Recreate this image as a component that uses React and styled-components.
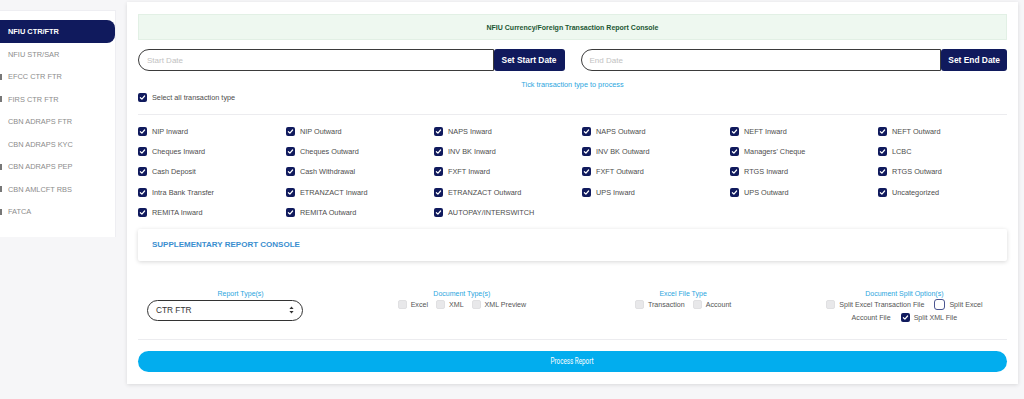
import React from "react";
import styled, { createGlobalStyle } from "styled-components";

const NAVY = "#101a5d";
const BLUE = "#2ba6de";

const GlobalStyle = createGlobalStyle`
  html, body {
    margin: 0;
    padding: 0;
    background: #f6f6f8;
    font-family: "Liberation Sans", Arial, sans-serif;
  }
  * { box-sizing: border-box; }
`;

const Page = styled.div`
  display: flex;
  align-items: flex-start;
  width: 1024px;
  height: 399px;
  overflow: hidden;
`;

const Sidebar = styled.nav`
  width: 116px;
  flex-shrink: 0;
  margin-top: 10px;
  padding: 9px 0 14px;
  background: #fff;
  border-top: 1px solid #eeeef2;
  border-right: 1px solid #eeeef2;
  display: flex;
  flex-direction: column;
`;

const SideItem = styled.div`
  position: relative;
  height: ${(p) => (p.$active ? "23px" : "22.5px")};
  display: flex;
  align-items: center;
  padding-left: 8px;
  font-size: 7.4px;
  color: ${(p) => (p.$active ? "#fff" : "#8c8c8c")};
  font-weight: ${(p) => (p.$active ? 700 : 400)};
  background: ${(p) => (p.$active ? NAVY : "transparent")};
  border-radius: ${(p) => (p.$active ? "0 8px 8px 0" : "0")};

  &::before {
    content: "";
    display: ${(p) => (p.$mark ? "block" : "none")};
    position: absolute;
    left: 0;
    top: 8px;
    width: 2px;
    height: 6px;
    background: #777;
  }
`;

const Main = styled.main`
  padding: 2px 6px 0 11px;
  flex: 1;
  min-width: 0;
`;

const Card = styled.section`
  background: #fff;
  padding: 12px 11px 12px;
  box-shadow: 0 1px 4px rgba(0, 0, 0, 0.12);
  display: flex;
  flex-direction: column;
`;

const Header = styled.div`
  height: 26px;
  display: flex;
  align-items: center;
  justify-content: center;
  background: #eef8f0;
  border: 1px solid #e2f0e5;
  color: #1d5733;
  font-size: 7px;
  font-weight: 700;
`;

const DateRow = styled.div`
  margin-top: 9px;
  display: flex;
  gap: 16px;
`;

const DateGroup = styled.div`
  flex: 1;
  display: flex;
  height: 22px;
`;

const DateInput = styled.div`
  flex: 1;
  border: 1px solid #3b3b3b;
  border-radius: 11px 0 0 11px;
  display: flex;
  align-items: center;
  padding-left: 8px;
  color: #c2c2c2;
  font-size: 8px;
`;

const DateButton = styled.button`
  height: 22px;
  border: none;
  border-radius: 3px;
  background: ${NAVY};
  color: #fff;
  font-family: inherit;
  font-weight: 700;
  font-size: 8.4px;
  padding: 0 ${(p) => p.$pad || "8px"};
`;

const Hint = styled.div`
  margin-top: 9px;
  line-height: 10px;
  text-align: center;
  color: ${BLUE};
  font-size: 7.3px;
`;

const CheckRow = styled.label`
  display: flex;
  align-items: center;
  gap: 5px;
  height: ${(p) => p.$h || "20.4px"};
  margin-top: ${(p) => p.$mt || "0"};
  font-size: 7.3px;
  color: #4d4d4d;
  white-space: nowrap;
`;

const Box = styled.span`
  display: inline-flex;
  align-items: center;
  justify-content: center;
  flex-shrink: 0;
  width: ${(p) => (p.$outline ? "11px" : "9px")};
  height: ${(p) => (p.$outline ? "11px" : "9px")};
  border-radius: ${(p) => (p.$outline ? "3px" : "2px")};
  vertical-align: middle;
  background: ${(p) => (p.$checked ? NAVY : p.$outline ? "#fff" : "#e8e8ea")};
  border: ${(p) =>
    p.$outline ? `1.3px solid #4a5590` : p.$checked ? "none" : "1px solid #e0e0e2"};
`;

const Divider = styled.hr`
  margin: ${(p) => p.$m || "0"};
  border: none;
  border-top: 1px solid #ececef;
  height: 0;
`;

const TypeGrid = styled.div`
  margin-top: 6px;
  display: grid;
  grid-template-columns: repeat(6, 148px);
`;

const SuppCard = styled.div`
  margin-top: 6px;
  height: 32px;
  display: flex;
  align-items: center;
  padding-left: 14px;
  background: #fff;
  box-shadow: 0 1px 4px rgba(0, 0, 0, 0.16);
  border-radius: 2px;
  color: #3a8ecf;
  font-size: 8px;
  font-weight: 700;
`;

const Options = styled.div`
  margin: 28px -8px 0;
  display: grid;
  grid-template-columns: repeat(4, 1fr);
`;

const OptCol = styled.div`
  display: flex;
  flex-direction: column;
  align-items: center;
`;

const OptLabel = styled.div`
  line-height: 10px;
  font-size: 7px;
  color: ${BLUE};
`;

const SelectBox = styled.div`
  align-self: flex-start;
  margin-left: 17px;
  margin-top: 1px;
  width: 156px;
  height: 21px;
  border: 1px solid #333;
  border-radius: 11px;
  display: flex;
  align-items: center;
  justify-content: space-between;
  padding: 0 8px 0 8px;
  font-size: 8.3px;
  color: #333;
`;

const InlineOpts = styled.div`
  width: ${(p) => p.$w || "auto"};
  text-align: center;
  line-height: 13px;
  font-size: 7.1px;
  color: #555;
`;

const Opt = styled.span`
  white-space: nowrap;
  margin-right: ${(p) => p.$mr || "8px"};
`;

const BoxGap = styled.span`
  display: inline-block;
  margin-right: 4px;
  line-height: 0;
  vertical-align: middle;
  position: relative;
  top: -1px;
`;

const ProcessButton = styled.button`
  margin-top: 11px;
  height: 21px;
  border: none;
  border-radius: 11px;
  background: #02adee;
  color: #fff;
  font-family: "Roboto", sans-serif;
  font-size: 8.5px;
  display: flex;
  align-items: center;
  justify-content: center;

  span {
    display: inline-block;
    transform: scaleX(0.74);
  }
`;

const Check = () => (
  <svg width="7" height="7" viewBox="0 0 7 7">
    <path d="M1.4 3.7 L2.9 5.1 L5.6 2" fill="none" stroke="#fff" strokeWidth="1.2" strokeLinecap="round" strokeLinejoin="round" />
  </svg>
);

const CheckBox = ({ checked, outline }) => (
  <Box $checked={checked} $outline={outline}>
    {checked && <Check />}
  </Box>
);

const InlineBox = (props) => (
  <BoxGap>
    <CheckBox {...props} />
  </BoxGap>
);

const Arrows = () => (
  <svg width="5" height="8" viewBox="0 0 5 8">
    <path d="M2.5 0.5 L4.6 3 L0.4 3 Z M2.5 7.5 L4.6 5 L0.4 5 Z" fill="#333" />
  </svg>
);

const sideItems = [
  { label: "NFIU CTR/FTR", active: true },
  { label: "NFIU STR/SAR" },
  { label: "EFCC CTR FTR", mark: true },
  { label: "FIRS CTR FTR", mark: true },
  { label: "CBN ADRAPS FTR" },
  { label: "CBN ADRAPS KYC" },
  { label: "CBN ADRAPS PEP", mark: true },
  { label: "CBN AMLCFT RBS", mark: true },
  { label: "FATCA", mark: true },
];

const types = [
  "NIP Inward", "NIP Outward", "NAPS Inward", "NAPS Outward", "NEFT Inward", "NEFT Outward",
  "Cheques Inward", "Cheques Outward", "INV BK Inward", "INV BK Outward", "Managers' Cheque", "LCBC",
  "Cash Deposit", "Cash Withdrawal", "FXFT Inward", "FXFT Outward", "RTGS Inward", "RTGS Outward",
  "Intra Bank Transfer", "ETRANZACT Inward", "ETRANZACT Outward", "UPS Inward", "UPS Outward", "Uncategorized",
  "REMITA Inward", "REMITA Outward", "AUTOPAY/INTERSWITCH",
];

export default function App() {
  return (
    <>
      <GlobalStyle />
      <Page>
        <Sidebar>
          {sideItems.map((it) => (
            <SideItem key={it.label} $active={it.active} $mark={it.mark}>
              {it.label}
            </SideItem>
          ))}
        </Sidebar>
        <Main>
          <Card>
            <Header>NFIU Currency/Foreign Transaction Report Console</Header>
            <DateRow>
              <DateGroup>
                <DateInput>Start Date</DateInput>
                <DateButton>Set Start Date</DateButton>
              </DateGroup>
              <DateGroup>
                <DateInput>End Date</DateInput>
                <DateButton $pad="7px">Set End Date</DateButton>
              </DateGroup>
            </DateRow>
            <Hint>Tick transaction type to process</Hint>
            <CheckRow $h="10px" $mt="2px">
              <CheckBox checked />
              Select all transaction type
            </CheckRow>
            <Divider $m="12px 0 0" />
            <TypeGrid>
              {types.map((t) => (
                <CheckRow key={t}>
                  <CheckBox checked />
                  {t}
                </CheckRow>
              ))}
            </TypeGrid>
            <SuppCard>SUPPLEMENTARY REPORT CONSOLE</SuppCard>
            <Options>
              <OptCol>
                <OptLabel>Report Type(s)</OptLabel>
                <SelectBox>
                  CTR FTR
                  <Arrows />
                </SelectBox>
              </OptCol>
              <OptCol>
                <OptLabel>Document Type(s)</OptLabel>
                <InlineOpts>
                  <Opt><InlineBox />Excel</Opt>
                  <Opt><InlineBox />XML</Opt>
                  <Opt $mr="0"><InlineBox />XML Preview</Opt>
                </InlineOpts>
              </OptCol>
              <OptCol>
                <OptLabel>Excel File Type</OptLabel>
                <InlineOpts>
                  <Opt><InlineBox />Transaction</Opt>
                  <Opt $mr="0"><InlineBox />Account</Opt>
                </InlineOpts>
              </OptCol>
              <OptCol>
                <OptLabel>Document Split Option(s)</OptLabel>
                <InlineOpts $w="176px">
                  <Opt><InlineBox />Split Excel Transaction File</Opt>{" "}
                  <Opt $mr="0"><InlineBox outline />Split Excel</Opt>{" "}
                  <Opt>Account File</Opt>{" "}
                  <Opt $mr="0"><InlineBox checked />Split XML File</Opt>
                </InlineOpts>
              </OptCol>
            </Options>
            <Divider $m="14px 0 0" />
            <ProcessButton>
              <span>Process Report</span>
            </ProcessButton>
          </Card>
        </Main>
      </Page>
    </>
  );
}
